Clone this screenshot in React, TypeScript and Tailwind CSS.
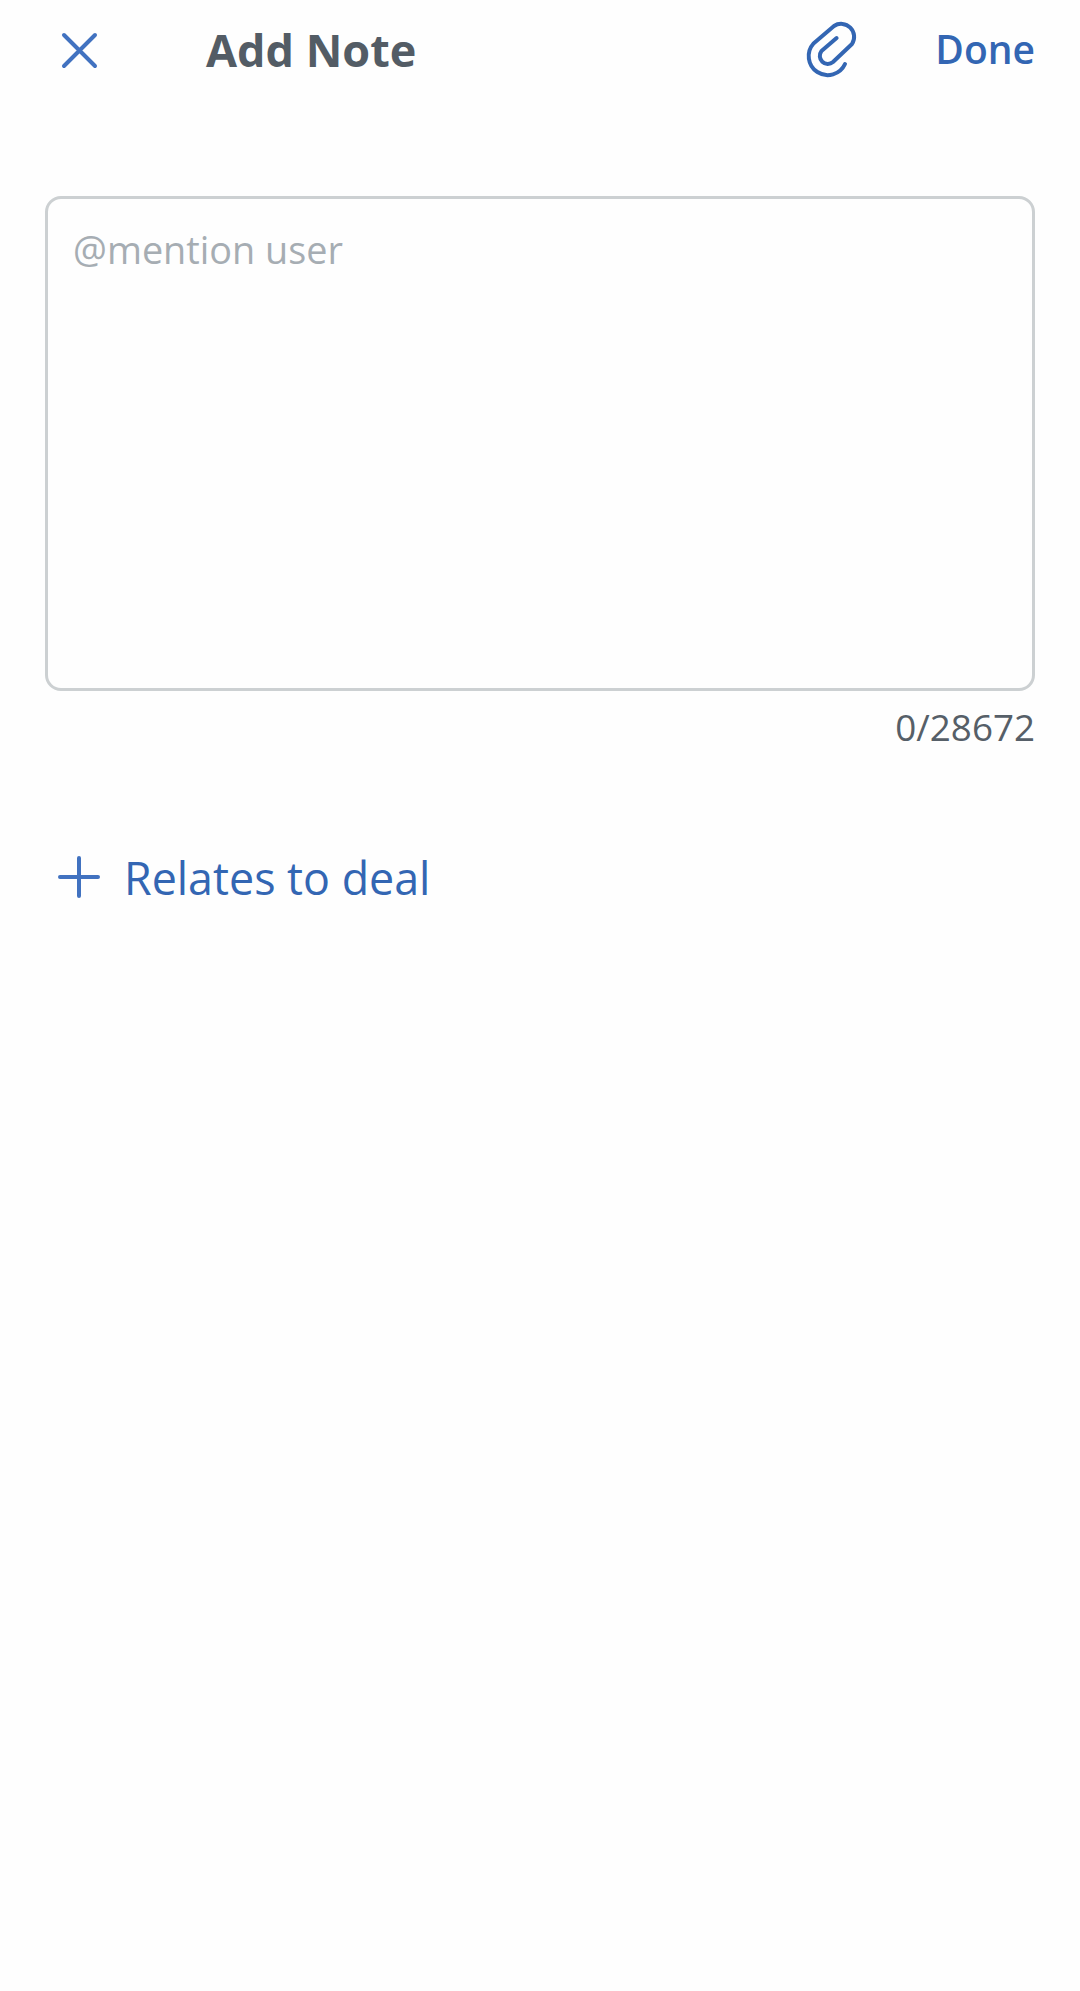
import React from 'react';

const App = () => {
  return (
    <div className="min-h-[1991px] w-[1080px] bg-[#fefefe] font-['Open_Sans',sans-serif]">
      <header className="flex h-[100px] items-center pl-[61px] pr-[45px]">
        <svg className="h-[37px] w-[37px]" viewBox="0 0 37 37" fill="none" stroke="#4172c0" strokeWidth="4" strokeLinecap="round">
          <path d="M3 3 L34 34 M34 3 L3 34" />
        </svg>
        <h1 className="mb-[2px] ml-[108px] text-[45px] font-bold leading-none text-[#535c65]">Add Note</h1>
        <svg className="mb-[4px] ml-auto h-[64px] w-[64px]" viewBox="0 0 64 64" fill="none" stroke="#3366b3" strokeWidth="4" strokeLinecap="round" strokeLinejoin="round">
          <path d="M45 48 A19 19 0 1 1 13.5 27.5 L34 10 A13 13 0 0 1 52 28 L33 46 A8 8 0 0 1 21.5 35 L36.6 22" />
        </svg>
        <button className="mb-[3px] ml-[71px] text-[39px] font-semibold leading-none text-[#3366b3]">Done</button>
      </header>

      <main className="px-[45px] pt-[96px]">
        <div className="h-[495px] rounded-[16px] border-[3px] border-[#ccd0d2] px-[25px] pt-[26px]">
          <p className="text-[37.8px] leading-[50px] text-[#a6adb3]">@mention user</p>
        </div>
        <p className="mt-[12px] text-right text-[36.8px] leading-[48px] text-[#565f68]">0/28672</p>

        <div className="mt-[97px] flex items-center">
          <svg className="mb-[3px] ml-[13px] h-[42px] w-[42px]" viewBox="0 0 42 42" fill="none" stroke="#4172c0" strokeWidth="4" strokeLinecap="round">
            <path d="M21 2 V40 M2 21 H40" />
          </svg>
          <span className="ml-[24px] text-[44.8px] leading-[60px] text-[#3366b3]">Relates to deal</span>
        </div>
      </main>
    </div>
  );
};

export default App;
